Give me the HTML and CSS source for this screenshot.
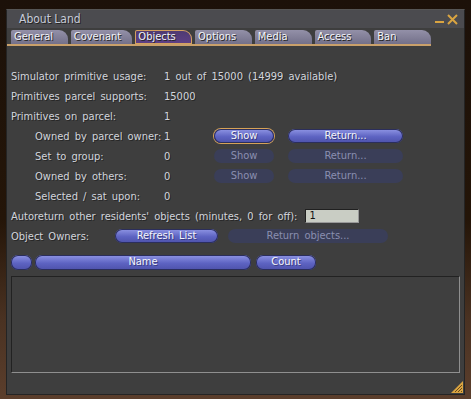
FILE: index.html
```html
<!DOCTYPE html>
<html lang="en">
<head>
  <meta charset="UTF-8">
  <link rel="stylesheet" href="styles.css">
</head>
<body>
<div class="floater">
    <div class="titleBar">
        <span class="title">About Land</span>
        <div class="titleControls">
            <span class="btnMin"></span>
            <svg class="btnClose" width="11" height="11" viewBox="0 0 11 11">
                <path d="M1 1 L10 10 M10 1 L1 10" stroke="#d9a441" stroke-width="2"/>
            </svg>
        </div>
    </div>
    <div class="tabBar">
        <div class="tab">General</div>
        <div class="tab">Covenant</div>
        <div class="tab selected">Objects</div>
        <div class="tab">Options</div>
        <div class="tab">Media</div>
        <div class="tab">Access</div>
        <div class="tab">Ban</div>
    </div>
    <div class="panel">
        <div class="primGrid">
            <span>Simulator primitive usage:</span>
            <span class="wide">1 out of 15000 (14999 available)</span>

            <span>Primitives parcel supports:</span>
            <span class="wide">15000</span>

            <span>Primitives on parcel:</span>
            <span class="wide">1</span>

            <span class="indent">Owned by parcel owner:</span>
            <span>1</span>
            <span class="btn focused">Show</span>
            <span class="btn">Return...</span>

            <span class="indent">Set to group:</span>
            <span>0</span>
            <span class="btn disabled">Show</span>
            <span class="btn disabled">Return...</span>

            <span class="indent">Owned by others:</span>
            <span>0</span>
            <span class="btn disabled">Show</span>
            <span class="btn disabled">Return...</span>

            <span class="indent">Selected / sat upon:</span>
            <span class="wide">0</span>
        </div>
        <div class="autoRow">
            <span>Autoreturn other residents' objects (minutes, 0 for off):</span>
            <span class="numInput">1</span>
        </div>
        <div class="ownersRow">
            <span>Object Owners:</span>
            <span class="btn refresh">Refresh List</span>
            <span class="btn disabled returnObjects">Return objects...</span>
        </div>
        <div class="listHeader">
            <span class="btn dot"></span>
            <span class="btn nameCol">Name</span>
            <span class="btn countCol">Count</span>
        </div>
        <div class="listBox"></div>
        <div class="bottomRow">
            <svg class="grip" width="12" height="12" viewBox="0 0 12 12">
                <path d="M12 0 L12 12 L0 12 Z" fill="#d9a441"/>
                <path d="M11 4 L4 11 M11 7 L7 11 M11 10 L10 11" stroke="#6a4a1a" stroke-width="1"/>
            </svg>
        </div>
    </div>
</div>
</body>
</html>
```

FILE: styles.css
```css
body {
    margin: 0;
    padding: 0;
    width: 471px;
    height: 399px;
    overflow: hidden;
    background: linear-gradient(#1c1109 0%, #241508 55%, #4a3222 80%, #5b3e2c 100%);
    font-family: 'DejaVu Sans Condensed', 'DejaVu Sans', sans-serif;
    font-size: 11px;
    word-spacing: 2px;
    color: #d2d5dc;
    text-shadow: 1px 1px 0 #262626;
}
.floater {
    margin: 9px 0 0 6px;
    width: 457px;
    height: 384px;
    background-color: #3e3e3e;
    border: 1px solid #242424;
    border-top-color: #555;
    display: flex;
    flex-direction: column;
}
.titleBar {
    height: 18px;
    background-color: #4b4b4f;
    display: flex;
    align-items: center;
    justify-content: space-between;
    padding: 0 6px 0 12px;
}
.title {
    font-size: 12px;
    color: #c6cad8;
    word-spacing: 0;
    margin-top: -1px;
}
.titleControls {
    display: flex;
    align-items: center;
    gap: 3px;
}
.btnMin {
    display: block;
    width: 9px;
    height: 2px;
    margin-top: 6px;
    background-color: #d9a441;
}
.tabBar {
    display: flex;
    gap: 3px;
    padding: 2px 0 0 4px;
    margin-right: 33px;
    border-bottom: 2px solid #c9a06a;
}
.tab {
    width: 55px;
    height: 14px;
    line-height: 14px;
    padding-left: 3px;
    background: linear-gradient(#9390a8, #737089);
    border-radius: 2px 9px 0 0;
    color: #f2f3f8;
}
.tab:nth-child(2) { width: 60px; }
.tab.selected {
    background: linear-gradient(#4e3a70, #5e3f86);
    box-shadow: inset 0 0 0 1px #d3a060;
}
.panel {
    flex: 1;
    display: flex;
    flex-direction: column;
    padding: 20px 0 0 4px;
}
.primGrid {
    display: grid;
    grid-template-columns: 153px 50px 74px 116px;
    grid-auto-rows: 20px;
    align-items: center;
}
.primGrid .wide {
    grid-column: 2 / 5;
}
.indent {
    padding-left: 24px;
    white-space: nowrap;
}
.btn {
    height: 14px;
    line-height: 14px;
    text-align: center;
    border-radius: 7px;
    background: linear-gradient(#8f95e4, #5d63c2 55%, #4d52aa);
    box-shadow: inset 0 0 0 1px #2b2e5c;
    color: #f4f5fb;
    text-shadow: 1px 1px 0 #3a3d80;
}
.btn.focused {
    box-shadow: inset 0 0 0 1px #2b2e5c, 0 0 0 1px #d5a257;
}
.btn.disabled {
    background: #3a3e58;
    box-shadow: none;
    color: #8a8fb0;
    text-shadow: none;
}
.primGrid .btn {
    width: 60px;
}
.primGrid .btn + .btn {
    width: 115px;
}
.autoRow {
    display: flex;
    align-items: center;
    height: 20px;
    gap: 8px;
}
.numInput {
    width: 49px;
    height: 12px;
    line-height: 12px;
    padding-left: 3px;
    background-color: #c9cdc4;
    border: 1px solid #202020;
    border-right-color: #999;
    border-bottom-color: #999;
    color: #111;
    text-shadow: none;
}
.ownersRow {
    display: flex;
    align-items: center;
    height: 20px;
}
.ownersRow > span:first-child {
    width: 104px;
}
.refresh {
    width: 103px;
}
.returnObjects {
    width: 160px;
    margin-left: 10px;
}
.listHeader {
    display: flex;
    align-items: center;
    gap: 3px;
    padding-top: 8px;
    height: 16px;
}
.dot {
    width: 21px;
    height: 15px;
}
.nameCol {
    width: 216px;
    height: 15px;
}
.countCol {
    width: 60px;
    height: 15px;
    margin-left: 2px;
}
.listBox {
    margin: 6px 4px 0 0;
    height: 95px;
    border: 1px solid #222;
    border-right-color: #8f8f8f;
    border-bottom-color: #8f8f8f;
    background-color: #3f3f3f;
}
.bottomRow {
    flex: 1;
    display: flex;
    justify-content: flex-end;
    align-items: flex-end;
    padding: 0 1px 1px 0;
}
```
